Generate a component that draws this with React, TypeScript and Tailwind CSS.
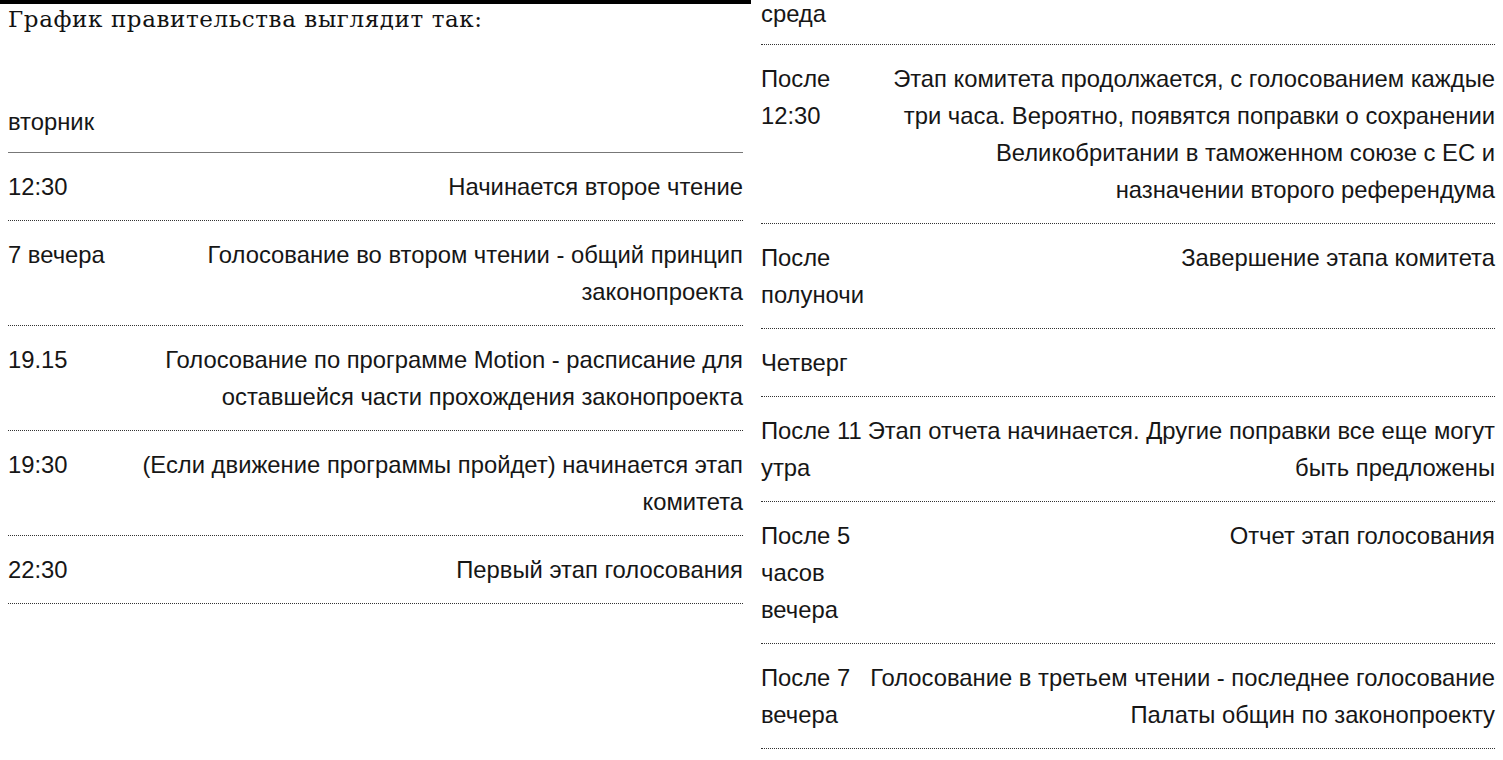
import React from "react";

type Row = { t: string[]; d: string; kind?: "day" };

const left: Row[] = [
  { t: ["12:30"], d: "Начинается второе чтение" },
  { t: ["7 вечера"], d: "Голосование во втором чтении - общий принцип законопроекта" },
  { t: ["19.15"], d: "Голосование по программе Motion - расписание для оставшейся части прохождения законопроекта" },
  { t: ["19:30"], d: "(Если движение программы пройдет) начинается этап комитета" },
  { t: ["22:30"], d: "Первый этап голосования" },
];

const right: Row[] = [
  { t: ["После", "12:30"], d: "Этап комитета продолжается, с голосованием каждые три часа. Вероятно, появятся поправки о сохранении Великобритании в таможенном союзе с ЕС и назначении второго референдума" },
  { t: ["После", "полуночи"], d: "Завершение этапа комитета" },
  { t: ["Четверг"], d: "", kind: "day" },
  { t: ["После 11", "утра"], d: "Этап отчета начинается. Другие поправки все еще могут быть предложены" },
  { t: ["После 5", "часов", "вечера"], d: "Отчет этап голосования" },
  { t: ["После 7", "вечера"], d: "Голосование в третьем чтении - последнее голосование Палаты общин по законопроекту" },
];

function Rows({ rows, cols }: { rows: Row[]; cols: string }) {
  return (
    <>
      {rows.map((r, i) =>
        r.kind === "day" ? (
          <div key={i} className="border-b border-dotted border-[#333] pt-[15px] pb-[15px]">
            {r.t[0]}
          </div>
        ) : (
          <div key={i} className={`grid ${cols} border-b border-dotted border-[#333] pt-[15px] pb-[15px]`}>
            <div className="whitespace-nowrap">
              {r.t.map((l, j) => (
                <div key={j}>{l}</div>
              ))}
            </div>
            <div className="text-right">{r.d}</div>
          </div>
        )
      )}
    </>
  );
}

export default function App() {
  return (
    <div className="flex w-[1503px] h-[760px] overflow-hidden bg-white text-[#161616] text-[23.8px] leading-[37px]" style={{ fontFamily: '"Liberation Sans", Arial, sans-serif' }}>
      <div className="w-[751px] shrink-0 border-t-4 border-black px-2">
        <div className="text-[23px] leading-[30px] tracking-[0.6px] text-[#121212] mb-[54px]" style={{ fontFamily: '"DejaVu Serif", "Liberation Serif", serif' }}>
          График правительства выглядит так:
        </div>
        <div className="pt-[15px] pb-[12px] border-b border-[#777]">вторник</div>
        <Rows rows={left} cols="grid-cols-[118px_1fr]" />
      </div>
      <div className="w-[750px] ml-[2px] shrink-0 px-2">
        <div className="leading-[27px] pb-[17px] border-b border-dotted border-[#333]">среда</div>
        <Rows rows={right} cols="grid-cols-[102px_1fr]" />
      </div>
    </div>
  );
}
